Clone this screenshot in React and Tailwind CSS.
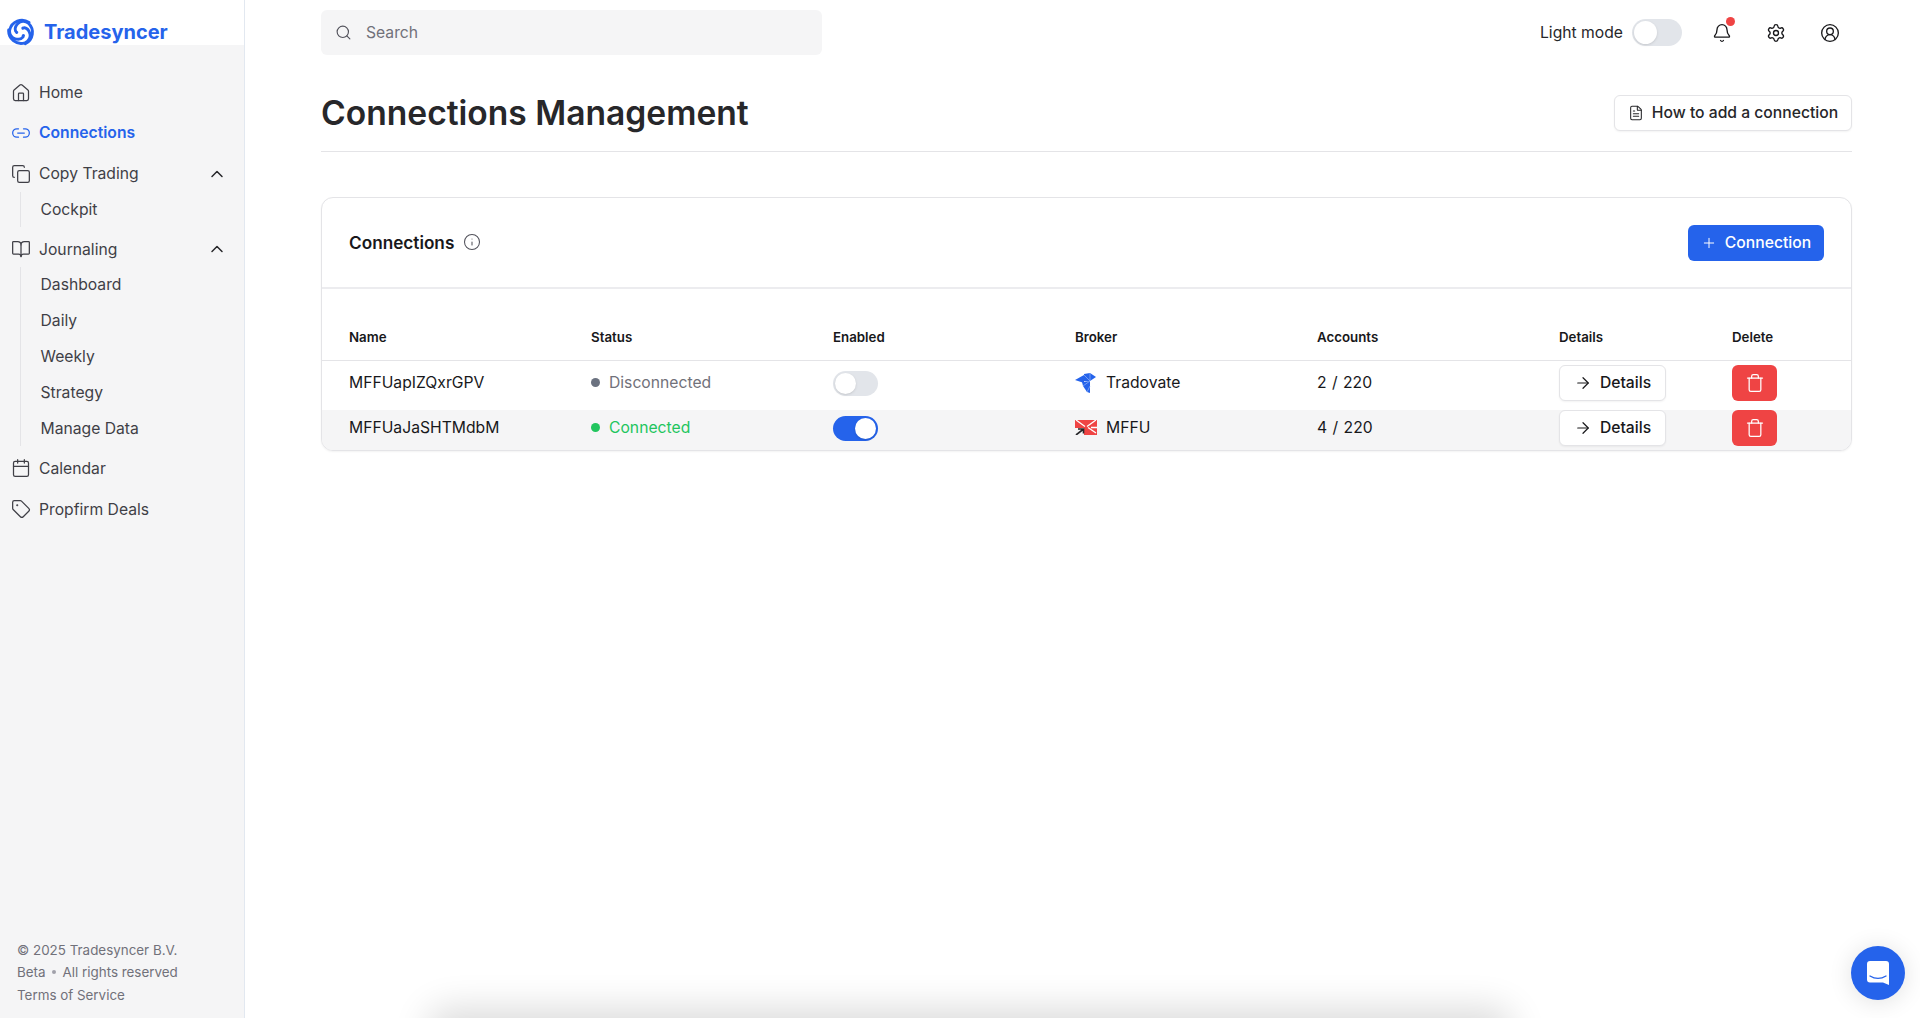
import {
    ArrowRight,
    Bell,
    BookOpen,
    Calendar,
    ChevronUp,
    CircleUserRound,
    Copy,
    FileText,
    House,
    Info,
    Link2,
    Plus,
    Search,
    Settings,
    Tag,
    Trash,
} from "lucide-react";

const Logo = () => (
    <svg width="28" height="28" viewBox="0 0 28 28" fill="none" stroke="#2563eb" strokeWidth="2.9" strokeLinecap="round">
        {[0, 120, 240].map((angle) => (
            <g key={angle} transform={`rotate(${angle} 14 14)`}>
                <path d="M22 4.4A12.5 12.5 0 0 0 2.7 12C2 16 4.5 20 8.2 20.9c2.8.7 6.3.1 7.7-1.7" />
                <circle cx="16.4" cy="17.6" r="1.6" fill="#2563eb" stroke="none" />
            </g>
        ))}
    </svg>
);

const TradovateLogo = () => (
    <svg width="22" height="20" viewBox="0 0 22 20">
        <polygon points="0,7 9,2 9,10" fill="#2563eb" />
        <polygon points="9,1 15,0 21,4 15,8 9,8" fill="#2563eb" />
        <polygon points="7,9 15,8 15,20 12,19 8,13" fill="#2563eb" />
        <path d="M9 2l6 6M15 0v8M8 13l7-5M12 19l3-6" stroke="#93b4f5" strokeWidth="0.7" />
    </svg>
);

const MffuLogo = () => (
    <svg width="22" height="15" viewBox="0 0 22 15">
        <rect x="0" y="0" width="22" height="15" fill="#ef4444" />
        <rect x="0" y="8" width="9" height="7" fill="#f5f5f6" />
        <path d="M1 0l9 6.5M21 0l-9 6.5M21 13l-8-5.5M16 7.5h6" stroke="#fff" strokeWidth="1.3" fill="none" />
        <path d="M1 15l7-5.5M3 9h5.5v4.5" stroke="#27272a" strokeWidth="1.6" fill="none" />
    </svg>
);

const NavItem = ({ icon: Icon, label, active, open }) => (
    <div className={`flex h-6 items-center pr-[17px] pl-[11px] text-[15.7px] ${active ? "font-semibold text-[#2563eb]" : "text-[#3f3f46]"}`}>
        <Icon size={20} strokeWidth={1.5} className="mr-[8px] shrink-0" />
        <span className="flex-1">{label}</span>
        {open && <ChevronUp size={20} strokeWidth={1.8} className="text-[#27272a]" />}
    </div>
);

const SubNav = ({ items }) => (
    <div className="ml-[20px] border-l border-[#e4e4e7] pl-[19.5px] text-[15.7px] text-[#3f3f46]">
        {items.map((item) => (
            <div key={item} className="flex h-[35.8px] items-center">
                {item}
            </div>
        ))}
    </div>
);

const Toggle = ({ on, big }) => (
    <div
        className={`flex items-center rounded-full p-[2px] ${big ? "h-[27px] w-[50px]" : "h-[25px] w-[45px]"} ${
            on ? "justify-end bg-[#2563eb]" : "justify-start bg-[#e2e5ea]"
        }`}
    >
        <div className={`rounded-full bg-white shadow-sm ${big ? "h-[23px] w-[23px]" : "h-[21px] w-[21px]"}`}></div>
    </div>
);

const rows = [
    {
        name: "MFFUapIZQxrGPV",
        status: "Disconnected",
        on: false,
        broker: "Tradovate",
        logo: <TradovateLogo />,
        accounts: "2 / 220",
    },
    {
        name: "MFFUaJaSHTMdbM",
        status: "Connected",
        on: true,
        broker: "MFFU",
        logo: <MffuLogo />,
        accounts: "4 / 220",
    },
];

const columns = "grid grid-cols-[242px_242px_242px_242px_242px_173px_1fr] pl-[27px] items-center";

const App = () => {
    return (
        <div className="relative flex h-screen overflow-hidden bg-white font-['Inter',sans-serif] text-[#18181b]">
            {/* sidebar */}
            <aside className="flex w-[245px] shrink-0 flex-col border-r border-[#e2e8f0] bg-[#f5f5f6]">
                <div className="flex h-[45px] items-end bg-white pl-[7px]">
                    <div className="mb-[-1px]">
                        <Logo />
                    </div>
                    <span className="mb-[-1px] ml-[9px] text-xl leading-7 font-bold text-[#2563eb]">Tradesyncer</span>
                </div>
                <nav className="mt-[36px] flex flex-1 flex-col">
                    <NavItem icon={House} label="Home" />
                    <div className="mt-[16px]">
                        <NavItem icon={Link2} label="Connections" active />
                    </div>
                    <div className="mt-[16.5px] mb-[6px]">
                        <NavItem icon={Copy} label="Copy Trading" open />
                    </div>
                    <SubNav items={["Cockpit"]} />
                    <div className="mt-[10px] mb-[6px]">
                        <NavItem icon={BookOpen} label="Journaling" open />
                    </div>
                    <SubNav items={["Dashboard", "Daily", "Weekly", "Strategy", "Manage Data"]} />
                    <div className="mt-[10px]">
                        <NavItem icon={Calendar} label="Calendar" />
                    </div>
                    <div className="mt-[17px]">
                        <NavItem icon={Tag} label="Propfirm Deals" />
                    </div>
                </nav>
                <div className="pb-[12px] pl-[17px] text-[13.4px] leading-[22.5px] text-[#71717a]">
                    <div>© 2025 Tradesyncer B.V.</div>
                    <div className="flex items-center">
                        Beta
                        <span className="mx-[6.5px] h-[4px] w-[4px] rounded-full bg-[#a1a1aa]"></span>
                        All rights reserved
                    </div>
                    <div>Terms of Service</div>
                </div>
            </aside>

            {/* main */}
            <main className="flex-1 pt-[10px] pr-[68px] pl-[76px]">
                <div className="flex items-center justify-between">
                    <div className="flex h-[45px] w-[501px] items-center rounded-md bg-[#f5f5f6] pl-[14px] text-[15.7px] text-[#71717a]">
                        <Search size={17} strokeWidth={1.6} className="mr-[14px] text-[#52525b]" />
                        Search
                    </div>
                    <div className="flex items-center pr-[12px]">
                        <span className="mr-[9px] text-[15.7px] text-[#27272a]">Light mode</span>
                        <Toggle big />
                        <div className="relative ml-[30px]">
                            <Bell size={20} strokeWidth={1.6} />
                            <span className="absolute top-[-6px] right-[-3px] h-[9px] w-[9px] rounded-full bg-[#ef4444]"></span>
                        </div>
                        <Settings size={20} strokeWidth={1.6} className="ml-[34px]" />
                        <CircleUserRound size={20} strokeWidth={1.6} className="ml-[34px]" />
                    </div>
                </div>

                <div className="mt-[34px] flex items-center justify-between border-b border-[#e4e4e7] pb-[14px]">
                    <h1 className="text-[33.6px] leading-[48px] font-semibold text-[#27272a]">Connections Management</h1>
                    <button className="flex h-[36px] w-[238px] items-center justify-center rounded-md border border-[#e4e4e7] bg-white text-[15.7px] font-medium text-[#27272a] shadow-xs">
                        <FileText size={16} strokeWidth={1.6} className="mr-[8px]" />
                        How to add a connection
                    </button>
                </div>

                {/* connections card */}
                <section className="mt-[45px] overflow-hidden rounded-xl border border-[#e4e4e7] bg-white shadow-xs">
                    <div className="flex h-[91px] items-center justify-between border-b-2 border-[#ececef] pr-[27px] pl-[27px]">
                        <div className="flex items-center">
                            <h2 className="text-[17.2px] font-semibold text-[#18181b]">Connections</h2>
                            <Info size={18} strokeWidth={1.4} className="ml-[9px] text-[#52525b]" />
                        </div>
                        <button className="flex h-[36px] w-[136px] items-center justify-center rounded-md bg-[#2563eb] text-[15.7px] font-medium text-white">
                            <Plus size={16} strokeWidth={1.5} className="mr-[8px]" />
                            Connection
                        </button>
                    </div>
                    <div className={`${columns} h-[72px] border-b border-[#e4e4e7] pt-[27px] text-[13.3px] font-semibold`}>
                        <div>Name</div>
                        <div>Status</div>
                        <div>Enabled</div>
                        <div>Broker</div>
                        <div>Accounts</div>
                        <div>Details</div>
                        <div>Delete</div>
                    </div>
                    {rows.map((row, i) => (
                        <div key={row.name} className={`${columns} text-[15.7px] ${i === 1 ? "bg-[#f5f5f6] pb-[4px]" : "pt-[4px] pb-[9px]"}`}>
                            <div>{row.name}</div>
                            <div className="flex items-center">
                                <span className={`mr-[9px] h-[9px] w-[9px] rounded-full ${row.on ? "bg-[#22c55e]" : "bg-[#6b7280]"}`}></span>
                                <span className={row.on ? "text-[#22c55e]" : "text-[#71717a]"}>{row.status}</span>
                            </div>
                            <div>
                                <Toggle on={row.on} />
                            </div>
                            <div className="flex items-center">
                                <span className="mr-[9px] flex w-[22px] justify-center">{row.logo}</span>
                                {row.broker}
                            </div>
                            <div className="[word-spacing:1px]">{row.accounts}</div>
                            <div>
                                <button className="flex h-[36px] w-[107px] items-center justify-center rounded-md border border-[#e4e4e7] bg-white font-medium shadow-xs">
                                    <ArrowRight size={18} strokeWidth={1.6} className="mr-[8px]" />
                                    Details
                                </button>
                            </div>
                            <div>
                                <button className="flex h-[36px] w-[45px] items-center justify-center rounded-md bg-[#ef4444] text-white">
                                    <Trash size={20} strokeWidth={1.5} />
                                </button>
                            </div>
                        </div>
                    ))}
                </section>
            </main>

            {/* shadow of the panel below the fold */}
            <div className="absolute top-[1020px] left-[440px] h-[40px] w-[1060px] rounded-lg bg-white shadow-[0_0_36px_12px_rgba(0,0,0,0.14)]"></div>

            {/* chat launcher */}
            <button className="absolute right-[15px] bottom-[18px] flex h-[54px] w-[54px] items-center justify-center rounded-full bg-[#2563eb] shadow-[0_2px_24px_rgba(0,0,0,0.12)]">
                <svg width="24" height="26" viewBox="0 0 24 26">
                    <path d="M4 1h16a3 3 0 0 1 3 3v21l-6-2.5H4a3 3 0 0 1-3-3V4a3 3 0 0 1 3-3z" fill="#fff" />
                    <path d="M4 16c5 3 11 3 16 0" stroke="#2563eb" strokeWidth="1.4" fill="none" strokeLinecap="round" />
                </svg>
            </button>
        </div>
    );
};

export default App;
